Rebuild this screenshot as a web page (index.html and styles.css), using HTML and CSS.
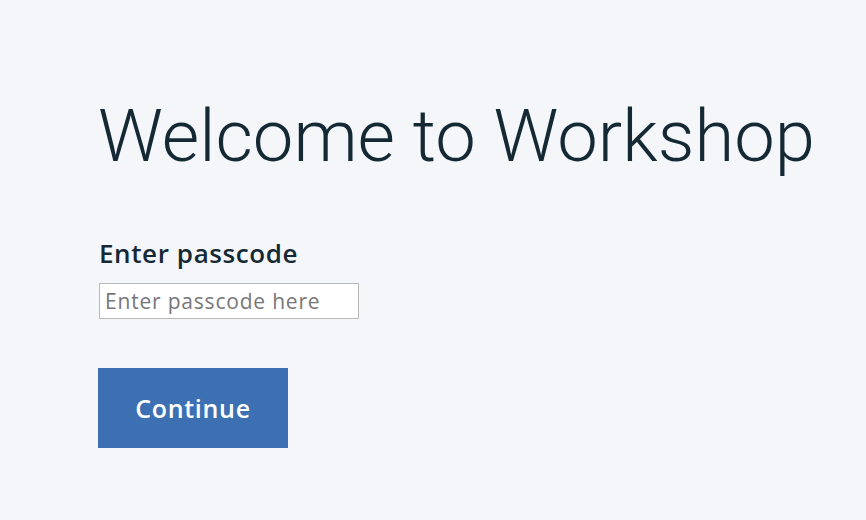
FILE: index.html
```html
<!DOCTYPE html>
<html>
<head>
<meta charset="utf-8">
<link rel="stylesheet" href="styles.css">
</head>
<body>
<main class="page">
  <h1 class="title">Welcome to Workshop</h1>
  <form class="form">
    <label class="label" for="pc">Enter passcode</label>
    <input class="input" id="pc" type="text" placeholder="Enter passcode here">
    <button class="btn" type="button">Continue</button>
  </form>
</main>
</body>
</html>
```
FILE: styles.css
```css
html, body {
  margin: 0;
  padding: 0;
  background: #f4f6fa;
  height: 100%;
}
body {
  font-family: "Roboto", "Noto Sans", sans-serif;
  color: #152935;
}
.page {
  padding: 92px 0 0 98px;
}
.title {
  margin: 0;
  font-size: 72.4px;
  font-weight: 300;
  line-height: 90px;
  white-space: nowrap;
}
.form {
  display: flex;
  flex-direction: column;
  align-items: flex-start;
  margin-top: 56px;
}
.label {
  font-family: "Open Sans", "Roboto", sans-serif;
  font-size: 26px;
  font-weight: 600;
  line-height: 30px;
  letter-spacing: 0.6px;
  margin-left: 1px;
}
.input {
  margin: 15px 0 0 1px;
  width: 260px;
  height: 36px;
  box-sizing: border-box;
  border: 1px solid #b8b8b8;
  background: #fff;
  padding: 0 5px;
  font-family: "Open Sans", "Roboto", sans-serif;
  font-size: 21px;
  letter-spacing: 0.8px;
  color: #152935;
  outline: none;
}
.input::placeholder {
  color: #777;
}
.btn {
  margin-top: 49px;
  width: 190px;
  height: 80px;
  border: 0;
  background: #3d70b2;
  color: #fff;
  font-family: "Open Sans", "Roboto", sans-serif;
  font-size: 25px;
  font-weight: 600;
  letter-spacing: 0.7px;
  cursor: pointer;
}
```
